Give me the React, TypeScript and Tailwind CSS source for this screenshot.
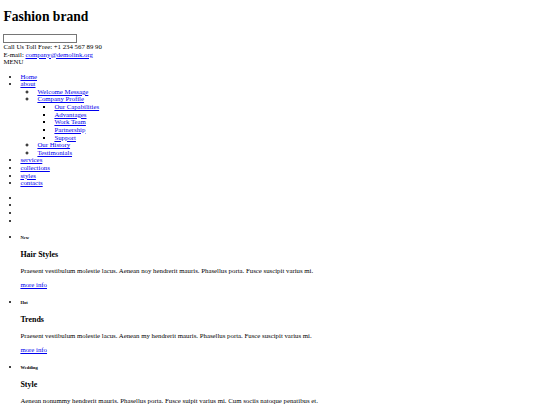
import React from 'react';

const link = 'text-[#0000ee] underline decoration-[0.5px] underline-offset-[1px]';

const submenu = ['Our Capabilities', 'Advantages', 'Work Team', 'Partnership', 'Support'];

const posts = [
  {
    tag: 'New',
    title: 'Hair Styles',
    text: 'Praesent vestibulum molestie lacus. Aenean noy hendrerit mauris. Phasellus porta. Fusce suscipit varius mi.',
  },
  {
    tag: 'Hot',
    title: 'Trends',
    text: 'Praesent vestibulum molestie lacus. Aenean my hendrerit mauris. Phasellus porta. Fusce suscipit varius mi.',
  },
  {
    tag: 'Wedding',
    title: 'Style',
    text: 'Aenean nonummy hendrerit mauris. Phasellus porta. Fusce suipit varius mi. Cum sociis natoque penatibus et.',
  },
];

export default function App() {
  return (
    <div className="min-h-[405px] bg-white px-[3.4px] pb-[10px] [font-family:'Liberation_Serif','Times_New_Roman',serif] text-[6.8px] leading-[7.62px] text-black">
      <h1 className="my-[9.1px] text-[13.6px] leading-[15.7px] font-bold">Fashion brand</h1>

      <form>
        <input type="text" className="block h-[9px] w-[74px] border border-[#767676] bg-white" />
      </form>
      <div>Call Us Toll Free: +1 234 567 89 90</div>
      <div>
        E-mail: <a href="#" className={link}>company@demolink.org</a>
      </div>
      <div>MENU</div>

      <ul className="my-[6.8px] list-disc pl-[17px]">
        <li><a href="#" className={link}>Home</a></li>
        <li>
          <a href="#" className={link}>about</a>
          <ul className="list-[circle] pl-[17px]">
            <li><a href="#" className={link}>Welcome Message</a></li>
            <li>
              <a href="#" className={link}>Company Profile</a>
              <ul className="list-[square] pl-[17px]">
                {submenu.map((s) => (
                  <li key={s}><a href="#" className={link}>{s}</a></li>
                ))}
              </ul>
            </li>
            <li><a href="#" className={link}>Our History</a></li>
            <li><a href="#" className={link}>Testimonials</a></li>
          </ul>
        </li>
        <li><a href="#" className={link}>services</a></li>
        <li><a href="#" className={link}>collections</a></li>
        <li><a href="#" className={link}>styles</a></li>
        <li><a href="#" className={link}>contacts</a></li>
      </ul>

      <ul className="my-[6.8px] list-disc pl-[17px]">
        <li className="h-[7.62px]"></li>
        <li className="h-[7.62px]"></li>
        <li className="h-[7.62px]"></li>
        <li className="h-[7.62px]"></li>
      </ul>

      <ul className="my-[6.8px] list-disc pl-[17px]">
        {posts.map((p) => (
          <li key={p.tag}>
            <h6 className="my-[8.8px] text-[4.56px] leading-[7.62px] font-bold">{p.tag}</h6>
            <h3 className="my-[7.6px] text-[7.96px] leading-[9.2px] font-bold">{p.title}</h3>
            <p className="my-[6.6px]">{p.text}</p>
            <p className="my-[6.6px]"><a href="#" className={link}>more info</a></p>
          </li>
        ))}
      </ul>
    </div>
  );
}
